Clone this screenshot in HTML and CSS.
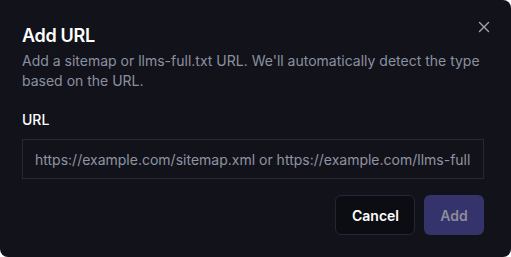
FILE: index.html
```html
<!DOCTYPE html>
<html lang="en">
<head>
<meta charset="utf-8">
<link rel="stylesheet" href="styles.css">
</head>
<body>
<div class="dialog">
  <button class="close" aria-label="Close">
    <svg width="12" height="12" viewBox="0 0 12 12"><path d="M1.5 1.5L10.5 10.5M10.5 1.5L1.5 10.5" stroke="#a3a5ad" stroke-width="1.4" stroke-linecap="round"/></svg>
  </button>
  <div class="header">
    <h2 class="title">Add URL</h2>
    <p class="desc">Add a sitemap or llms-full.txt URL. We'll automatically detect the type based on the URL.</p>
  </div>
  <div class="field">
    <label class="label" for="url">URL</label>
    <input id="url" class="input" type="text" placeholder="https://example.com/sitemap.xml or https://example.com/llms-full.txt">
  </div>
  <div class="actions">
    <button class="btn btn-outline">Cancel</button>
    <button class="btn btn-primary">Add</button>
  </div>
</div>
</body>
</html>
```
FILE: styles.css
```css
html, body {
  margin: 0;
  padding: 0;
  background: #ffffff;
}
body {
  font-family: Inter, "Noto Sans", sans-serif;
}
.dialog {
  position: relative;
  box-sizing: border-box;
  width: 511px;
  height: 257px;
  background: #12131a;
  border-radius: 0 8px 8px 8px;
  padding: 22px 27px 23px 22px;
  display: flex;
  flex-direction: column;
}
.close {
  position: absolute;
  top: 21px;
  right: 21px;
  width: 12px;
  height: 12px;
  padding: 0;
  border: 0;
  background: none;
  display: flex;
}
.header {
  display: flex;
  flex-direction: column;
}
.title {
  margin: 0;
  font-size: 18px;
  line-height: 28px;
  font-weight: 600;
  color: #ffffff;
  letter-spacing: -0.3px;
}
.desc {
  margin: 1px 0 0;
  font-size: 14px;
  line-height: 20px;
  color: #8b90a0;
}
.field {
  margin-top: 19px;
  display: flex;
  flex-direction: column;
  gap: 9px;
}
.label {
  font-size: 14px;
  line-height: 20px;
  font-weight: 500;
  color: #ffffff;
}
.input {
  box-sizing: border-box;
  height: 40px;
  width: 100%;
  background: #12131a;
  border: 1px solid #242837;
  border-radius: 0;
  padding: 0 12px;
  font-family: Inter, "Noto Sans", sans-serif;
  font-size: 14px;
  color: #ffffff;
  outline: none;
}
.input::placeholder {
  color: #8f94a3;
  opacity: 1;
}
.actions {
  margin-top: 16px;
  display: flex;
  justify-content: flex-end;
  gap: 9px;
}
.btn {
  box-sizing: border-box;
  height: 40px;
  border-radius: 6px;
  font-family: Inter, "Noto Sans", sans-serif;
  font-size: 14px;
  font-weight: 600;
  padding: 0 16px;
}
.btn-outline {
  width: 80px;
  background: #0c0d12;
  border: 1px solid #232634;
  color: #ffffff;
}
.btn-primary {
  width: 60px;
  background: #35336b;
  border: 0;
  color: #8c8c99;
}
```
